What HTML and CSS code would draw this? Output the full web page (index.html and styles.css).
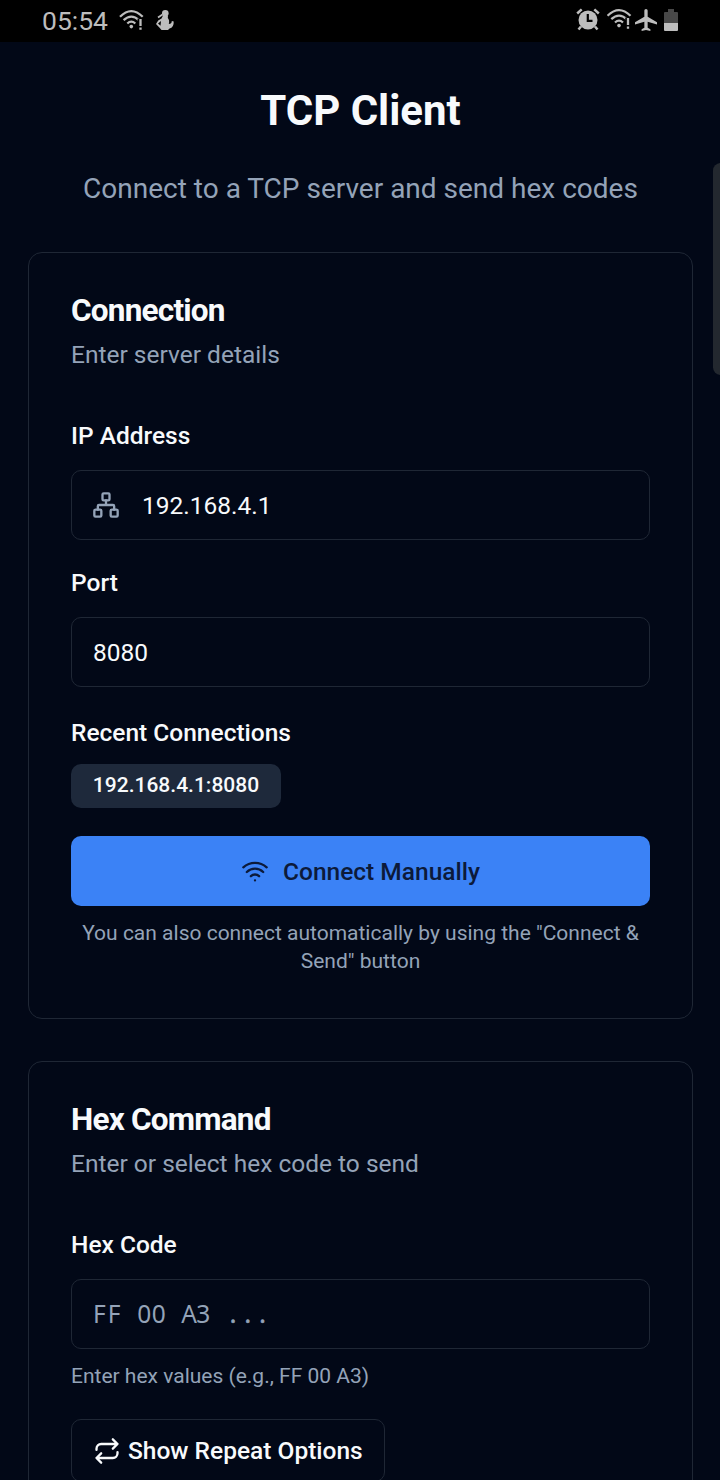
FILE: index.html
```html
<!DOCTYPE html>
<html lang="en">
<head>
<meta charset="utf-8">
<title>TCP Client</title>
<link rel="stylesheet" href="styles.css">
</head>
<body>
<div class="screen">
  <div class="status-bar">
    <div class="status-left">
      <span class="clock">05:54</span>
      <svg class="status-wifi" width="26" height="22" viewBox="0 0 26 22" fill="none" stroke="#bdbdbd" stroke-width="2.300"><path d="M1 7.800Q12.300 -3.500 23.700 7.800M4.600 11.200Q12.300 4 20 11.200M8.300 14.500Q12.300 10.800 16.300 14.500"/><circle cx="12.300" cy="17.600" r="1.800" fill="#bdbdbd" stroke="none"/><path d="M20.800 9.500V21" stroke="#000" stroke-width="4.500"/><path d="M21.500 10V17M21.500 18.600V20.800"/></svg>
      <svg class="status-figure" width="20" height="22" viewBox="0 0 20 22" fill="#bdbdbd"><circle cx="10.300" cy="4.300" r="3.300"/><path d="M8 6.500H13L12.800 9Q14.800 11 13.800 15Q16.800 15 16.800 12L18.700 12.500Q19 18.500 14.500 19.500L13 21H6.500L4.800 19L1 15L3.200 11.500L6.500 9.500Z"/><path d="M3 14.500L5.500 16.800L6 12Z" fill="#000"/><path d="M3 8.500L7.500 5.500" stroke="#bdbdbd" stroke-width="1.800"/></svg>
    </div>
    <div class="status-right">
      <svg width="24" height="23" viewBox="0 0 24 23" fill="#bdbdbd"><circle cx="12" cy="12" r="9.500"/><path d="M1.200 5.500L5.700 1.300M22.800 5.500L18.300 1.300M5 18.500L2.500 21.500M19 18.500L21.500 21.500" stroke="#bdbdbd" stroke-width="2.500"/><path d="M11.800 6V12.800H16.500" fill="none" stroke="#000" stroke-width="2.200"/></svg>
      <svg class="wifi-right" width="26" height="22" viewBox="0 0 26 22" fill="none" stroke="#bdbdbd" stroke-width="2.300"><path d="M.5 7.800Q12 -3.500 23.500 7.800M4.300 11.200Q12 4 19.700 11.200M8 14.500Q12 10.800 16 14.500"/><circle cx="12" cy="17.600" r="1.800" fill="#bdbdbd" stroke="none"/><path d="M20.500 9.500V21" stroke="#000" stroke-width="4.500"/><path d="M21 10V17M21 18.600V20.800"/></svg>
      <svg class="plane" width="22" height="22" viewBox="2 2 20 20" fill="#bdbdbd"><path d="M22 16v-2l-8.500-5V3.500C13.500 2.670 12.830 2 12 2s-1.500.67-1.500 1.500V9L2 14v2l8.500-2.500V19L8 20.500V22l4-1 4 1v-1.500L13.500 19v-5.500L22 16z"/></svg>
      <svg class="battery" width="14" height="22" viewBox="0 0 14 22"><path d="M4 0H10V3H13Q14 3 14 4V14H0V4Q0 3 1 3H4Z" fill="#484848"/><path d="M0 14H14V21Q14 22 13 22H1Q0 22 0 21Z" fill="#bdbdbd"/></svg>
    </div>
  </div>
  <div class="scroll-thumb"></div>
  <main class="page">
    <header class="page-header">
      <h1 class="page-title">TCP Client</h1>
      <p class="page-subtitle">Connect to a TCP server and send hex codes</p>
    </header>

    <section class="card">
      <h2 class="card-title">Connection</h2>
      <p class="card-description">Enter server details</p>
      <div class="field field-first">
        <div class="label">IP Address</div>
        <div class="input">
          <svg class="network" width="28" height="28" viewBox="0 0 24 24" fill="none" stroke="#94a3b8" stroke-width="2" stroke-linecap="round" stroke-linejoin="round"><rect x="16" y="16" width="6" height="6" rx="1"/><rect x="2" y="16" width="6" height="6" rx="1"/><rect x="9" y="2" width="6" height="6" rx="1"/><path d="M5 16v-3a1 1 0 0 1 1-1h12a1 1 0 0 1 1 1v3M12 12V8"/></svg>
          <span>192.168.4.1</span>
        </div>
      </div>
      <div class="field">
        <div class="label">Port</div>
        <div class="input"><span>8080</span></div>
      </div>
      <div class="recent">
        <div class="label">Recent Connections</div>
        <div class="badge">192.168.4.1:8080</div>
      </div>
      <div class="button-primary">
        <svg width="28" height="28" viewBox="0 0 24 24" fill="none" stroke="currentColor" stroke-width="2" stroke-linecap="round" stroke-linejoin="round"><path d="M12 20h.01M2 8.820a15 15 0 0 1 20 0M5 12.859a10 10 0 0 1 14 0M8.500 16.429a5 5 0 0 1 7 0"/></svg>
        <span>Connect Manually</span>
      </div>
      <p class="hint hint-center">You can also connect automatically by using the "Connect &amp;<br>Send" button</p>
    </section>

    <section class="card">
      <h2 class="card-title">Hex Command</h2>
      <p class="card-description">Enter or select hex code to send</p>
      <div class="field field-first">
        <div class="label">Hex Code</div>
        <div class="input placeholder"><span class="hex-f">FF</span><span class="hex-d">00</span><span class="hex-a"><span class="hex-wide">A</span>3</span><span class="hex-dots">...</span></div>
      </div>
      <p class="hint hint-hex">Enter hex values (e.g., FF 00 A3)</p>
      <div class="button-outline">
        <svg width="28" height="28" viewBox="0 0 24 24" fill="none" stroke="currentColor" stroke-width="2" stroke-linecap="round" stroke-linejoin="round"><path d="m17 2 4 4-4 4M3 11v-1a4 4 0 0 1 4-4h14M7 22l-4-4 4-4M21 13v1a4 4 0 0 1-4 4H3"/></svg>
        <span>Show Repeat Options</span>
      </div>
    </section>
  </main>
</div>
</body>
</html>
```
FILE: styles.css
```css
* { box-sizing: border-box; }
body { margin: 0; background: #020817; }
h1, h2, p { margin: 0; }
svg { display: block; flex: none; }
.screen {
  position: relative;
  width: 720px;
  height: 1480px;
  overflow: hidden;
  background: #020817;
  color: #f8fafc;
  font-family: Roboto, sans-serif;
  font-size: 24.5px;
}
.status-bar {
  display: flex;
  justify-content: space-between;
  height: 42px;
  padding: 9px 42px 0 41px;
  background: #000;
}
.status-left, .status-right { display: flex; align-items: flex-start; }
.clock { width: 78px; padding-left: 1px; color: #bdbdbd; font-size: 26.5px; line-height: 23px; }
.status-figure { margin-left: 10px; }
.wifi-right { margin-left: 7px; }
.status-right { margin-top: -1px; }
.plane { margin-left: 2px; margin-top: 1px; }
.battery { margin-left: 7px; margin-top: 1px; }
.scroll-thumb {
  position: absolute;
  top: 163px;
  right: -8px;
  width: 15px;
  height: 212px;
  border-radius: 8px;
  background: #23282f;
}
.page { padding: 41px 27px 0 28px; }
.page-header { height: 169px; text-align: center; }
.page-title { font-size: 42px; font-weight: 700; line-height: 56px; }
.page-subtitle { margin-top: 29px; color: #94a3b8; font-size: 28px; line-height: 42px; }
.card {
  height: 767px;
  margin-bottom: 42px;
  padding: 42px;
  border: 1px solid #1f2735;
  border-radius: 14px;
}
.card-title { font-size: 31.5px; font-weight: 700; line-height: 31.5px; letter-spacing: -0.79px; }
.card-description { margin-top: 10.5px; color: #94a3b8; line-height: 35px; }
.label { font-weight: 500; line-height: 24px; }
.field { margin-top: 31px; }
.field-first { margin-top: 52px; }
.input {
  display: flex;
  align-items: center;
  height: 70px;
  margin-top: 22px;
  padding: 0 21px;
  border: 1px solid #1f2735;
  border-radius: 10px;
}
.network { margin-right: 22px; margin-left: -1px; }
.recent { margin-top: 34px; }
.badge {
  width: 210px;
  height: 44px;
  margin-top: 19px;
  border-radius: 10px;
  background: #1e293b;
  font-size: 21px;
  font-weight: 500;
  line-height: 42px;
  text-align: center;
}
.button-primary {
  display: flex;
  align-items: center;
  justify-content: center;
  gap: 14px;
  height: 70px;
  margin-top: 28px;
  border-radius: 10px;
  background: #3b82f6;
  color: #0c1a3a;
  font-weight: 500;
}
.hint { color: #94a3b8; font-size: 21px; line-height: 28px; }
.hint-center { margin-top: 13px; text-align: center; }
.placeholder { gap: 14.7px; padding-bottom: 2px; color: #94a3b8; font-family: "Noto Sans", "Open Sans", sans-serif; }
.hex-f { letter-spacing: 2px; }
.hex-d, .hex-a { letter-spacing: 0.7px; }
.hex-wide { letter-spacing: -0.6px; }
.hex-dots { padding-left: 4px; letter-spacing: 8.2px; -webkit-text-stroke: 0.6px currentColor; }
.hint-hex { margin-top: 13px; }
.button-outline {
  display: flex;
  align-items: center;
  gap: 7px;
  width: 314px;
  height: 63px;
  margin-top: 29px;
  padding-left: 21px;
  border: 1px solid #1f2735;
  border-radius: 10px;
  font-weight: 500;
}
```
